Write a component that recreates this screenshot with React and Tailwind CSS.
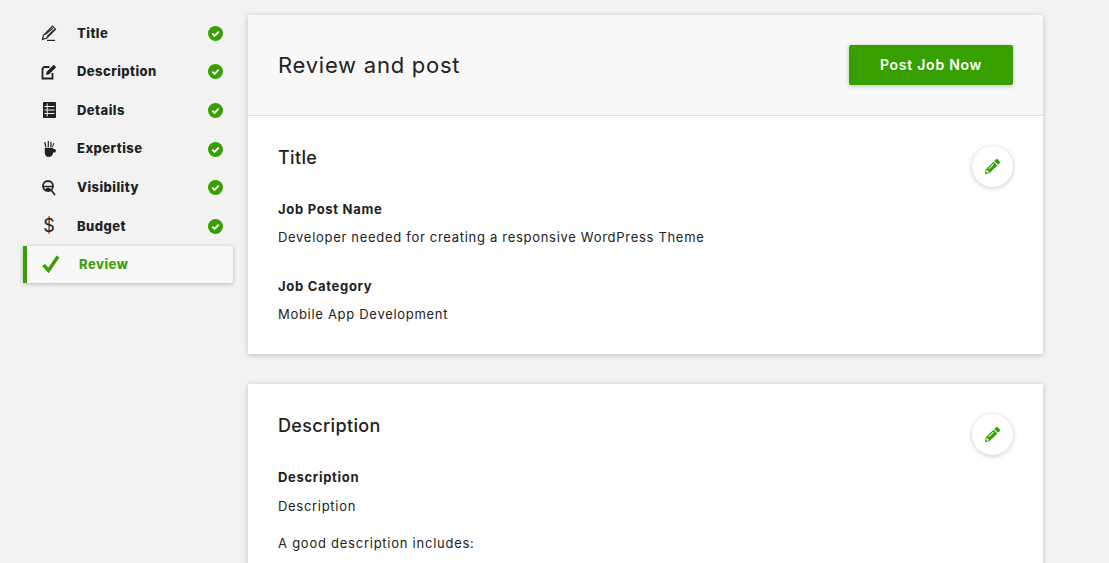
import React from "react";
import { FaPencilAlt } from "react-icons/fa";

const CheckBadge = () => (
  <svg width="15" height="15" viewBox="0 0 16 16" className="ml-auto mr-[10px] shrink-0">
    <circle cx="8" cy="8" r="8" fill="#37a000" />
    <path d="M4.6 8.2l2.4 2.4 4.4-4.6" fill="none" stroke="#fff" strokeWidth="2" />
  </svg>
);

const PencilIcon = () => (
  <svg width="16" height="16" viewBox="0 0 16 16" fill="none" stroke="#222" strokeWidth="1.2">
    <path d="M11.5 1.2l3 3-9 9-4 1.2 1-4.2z" />
    <path d="M4.2 9.6l7.6-6.4M6 11.6l7-6.6" />
    <path d="M6 15.4h8" />
  </svg>
);

const EditIcon = () => (
  <svg width="16" height="16" viewBox="0 0 16 16" fill="none">
    <path d="M8.500 3H3.200L1.500 4.700v9.800h10V9" stroke="#222" strokeWidth="1.800" />
    <path d="M12.700.8l2.500 2.500-7 7-3.300.8.800-3.300z" fill="#222" />
  </svg>
);

const DetailsIcon = () => (
  <svg width="13" height="16" viewBox="0 0 13 16">
    <rect width="13" height="16" rx="0.8" fill="#222" />
    <path d="M1.5 4.500h10M1.500 8h10M1.500 11.500h10M4.200 1.500v13" stroke="#f2f2f2" strokeWidth="1" />
  </svg>
);

const ExpertiseIcon = () => (
  <svg width="13" height="16" viewBox="0 0 13 16" fill="#222">
    <path d="M1 1.500l1.300-.4L3.600 6H2.400z" />
    <path d="M4.700 0h1.200v6H4.700z" />
    <path d="M7.300 .8h1.200V6H7.300z" />
    <path d="M10.300 2l1.100.5L9.800 6H8.900z" />
    <path d="M1.800 6.800h8.400V8h1.300c.8 0 1.300.6 1.300 1.300v1c0 .8-.6 1.300-1.300 1.300h-1.400c-.3 2.400-1.200 4.400-4 4.400-3 0-4.300-2-4.300-4.600z" />
  </svg>
);

const VisibilityIcon = () => (
  <svg width="14" height="16" viewBox="0 0 14 16" fill="none" stroke="#222">
    <circle cx="6" cy="6" r="5" strokeWidth="1.800" />
    <path d="M1.500 6.500h9" strokeWidth="1.400" />
    <path d="M3 9.500c.6-1.200 1.600-1.800 3-1.800s2.400.6 3 1.800c-.8.800-1.900 1.200-3 1.200s-2.200-.4-3-1.200z" fill="#222" stroke="none" />
    <path d="M9.500 10.500l3.500 4.500" strokeWidth="1.600" />
  </svg>
);

const DollarIcon = () => (
  <span className="text-[18px] leading-none font-normal text-[#222]">$</span>
);

const steps = [
  { label: "Title", icon: <PencilIcon /> },
  { label: "Description", icon: <EditIcon /> },
  { label: "Details", icon: <DetailsIcon /> },
  { label: "Expertise", icon: <ExpertiseIcon /> },
  { label: "Visibility", icon: <VisibilityIcon /> },
  { label: "Budget", icon: <DollarIcon /> },
];

const EditButton = () => (
  <button className="flex h-[41px] w-[41px] shrink-0 items-center justify-center rounded-full bg-white shadow-[0_1px_5px_rgba(0,0,0,0.22)]">
    <FaPencilAlt size={15} color="#37a000" />
  </button>
);

const Field = ({ label, children, className, gap = "mt-[10px]" }) => (
  <div className={className}>
    <div className="text-[13px] leading-[18px] font-bold tracking-[0.7px] text-[#222]">{label}</div>
    <div className={`${gap} text-[13px] leading-[18px] tracking-[0.7px] text-[#222]`}>{children}</div>
  </div>
);

export default function App() {
  return (
    <div className="flex h-[563px] overflow-hidden bg-[#f2f2f2] font-['Inter',sans-serif]">
      <aside className="w-[248px] shrink-0 pt-[14px] pl-[23px] pr-[15px]">
        {steps.map((s) => (
          <div key={s.label} className="flex h-[38.6px] items-center">
            <span className="flex w-[54px] shrink-0 justify-center pr-[2px]">{s.icon}</span>
            <span className="text-[13px] font-extrabold tracking-[0.45px] text-[#222]">{s.label}</span>
            <CheckBadge />
          </div>
        ))}
        <div className="flex h-[37px] items-center rounded-r-[2px] border-l-[4px] border-[#37a000] bg-[#f8f8f8] shadow-[0_1px_4px_rgba(0,0,0,0.25)]">
          <span className="flex w-[52px] shrink-0 justify-center pr-[4px]">
            <svg width="18" height="18" viewBox="0 0 18 18" fill="none" stroke="#37a000" strokeWidth="3.400">
              <path d="M1.500 10l5 5.500L16 1.500" />
            </svg>
          </span>
          <span className="pt-[1px] text-[13px] font-extrabold tracking-[0.45px] text-[#43a016]">Review</span>
        </div>
      </aside>

      <main className="w-[795px] shrink-0 pt-[15px]">
        <section className="bg-white shadow-[0_1px_5px_rgba(0,0,0,0.22)]">
          <header className="flex h-[101px] items-center justify-between border-b border-[#e0e0e0] bg-[#f8f8f8] px-[30px]">
            <h1 className="text-[22px] tracking-[0.75px] text-[#222]">Review and post</h1>
            <button className="h-[40px] w-[164px] rounded-[2px] bg-[#37a000] pb-[1px] text-[14px] font-semibold tracking-[0.75px] text-white shadow-[0_1px_4px_rgba(0,0,0,0.25)]">
              Post Job Now
            </button>
          </header>
          <div className="h-[238px] px-[30px] pt-[30px]">
            <div className="flex items-start justify-between">
              <h2 className="text-[18px] leading-[24px] font-medium tracking-[0.35px] text-[#222]">Title</h2>
              <EditButton />
            </div>
            <Field label="Job Post Name" className="mt-[13px]">
              Developer needed for creating a responsive WordPress Theme
            </Field>
            <Field label="Job Category" className="mt-[31px]">
              Mobile App Development
            </Field>
          </div>
        </section>

        <section className="mt-[30px] h-[300px] bg-white px-[30px] pt-[30px] shadow-[0_1px_5px_rgba(0,0,0,0.22)]">
          <div className="flex items-start justify-between">
            <h2 className="text-[18px] leading-[24px] font-medium tracking-[0.35px] text-[#222]">Description</h2>
            <EditButton />
          </div>
          <Field label="Description" className="mt-[13px]" gap="mt-[11px]">
            Description
          </Field>
          <p className="mt-[19px] text-[13px] leading-[18px] tracking-[0.75px] text-[#222]">A good description includes:</p>
        </section>
      </main>
    </div>
  );
}
